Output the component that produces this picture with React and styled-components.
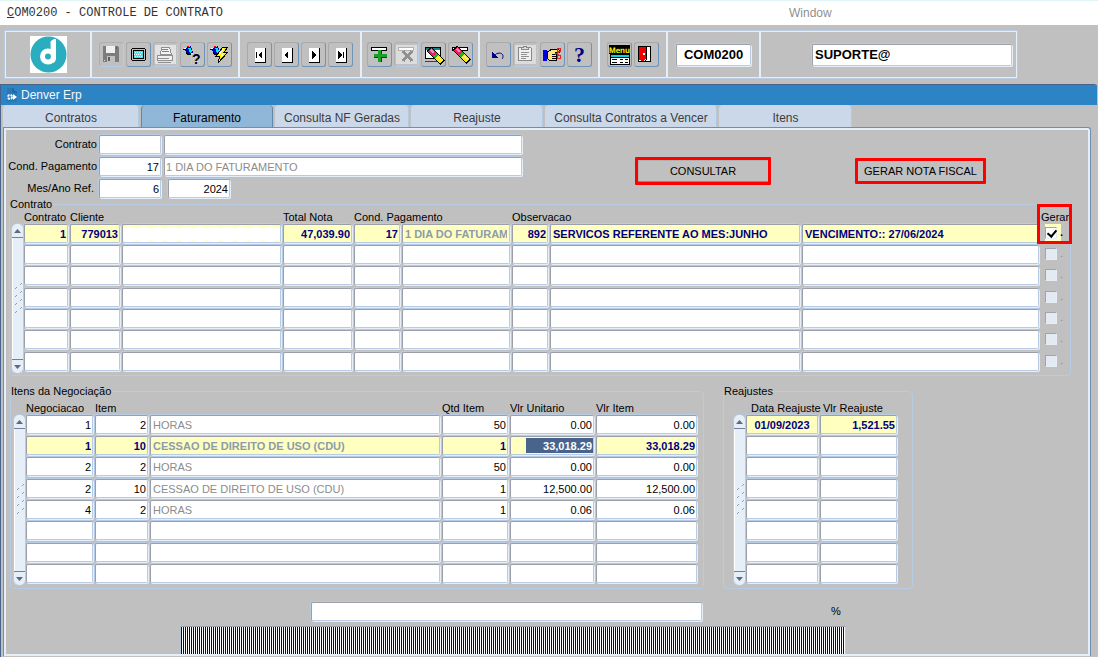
import React, { useState } from 'react'
import styled, { createGlobalStyle, css } from 'styled-components'

const face = '#c0c0c0'
const edge = '#b7cbe4'
const light = '#e6eef8'
const navy = '#000080'
const current = '#ffffc0'

const GlobalStyle = createGlobalStyle`
  * {
    box-sizing: border-box;
  }
  body {
    margin: 0;
    background: ${face};
    color: #000;
    font: 11px/13px 'Liberation Sans', Arial, sans-serif;
  }
  button, input {
    font: inherit;
    color: inherit;
    margin: 0;
    outline: 0;
  }
`

const Page = styled.div`
  display: flex;
  flex-direction: column;
  min-height: 100vh;
`

const MenuBar = styled.header`
  display: flex;
  align-items: center;
  height: 25px;
  padding-left: 7px;
  background: #fff;
  border-top: 1px solid #e0f4f8;
`

const ProgramTitle = styled.h1`
  width: 782px;
  margin: 0;
  font: 12px/16px 'Liberation Mono', 'Courier New', monospace;
  color: #333;
  &::first-letter {
    text-decoration: underline;
  }
`

const MenuItem = styled.button`
  padding: 0;
  border: none;
  background: none;
  font-size: 12px;
  line-height: 16px;
  color: #909090;
`

const Toolbar = styled.div`
  display: flex;
  align-self: flex-start;
  height: 49px;
  margin: 5px 0 5px 4px;
  border: 2px solid ${light};
  outline: 1px solid ${edge};
  outline-offset: -1px;
`

const ToolGroup = styled.div`
  display: flex;
  align-items: center;
  justify-content: center;
  gap: 2px;
  width: ${p => p.$width}px;
  border-right: 2px solid ${light};
  &:last-child {
    justify-content: flex-end;
    border-right: none;
    padding-right: 4px;
  }
`

const ToolButton = styled.button`
  width: 25px;
  height: 25px;
  padding: 0;
  border: 1px solid;
  border-color: #a9a9a9 #6f93b8 #6f93b8 #a9a9a9;
  border-radius: 3px;
  background: ${face};
  line-height: 0;
  cursor: pointer;
  svg {
    display: block;
  }
  &:disabled {
    border-color: #b0b0b0 ${edge} ${edge} #b0b0b0;
    cursor: default;
  }
`

const field = css`
  display: block;
  min-width: 0;
  border: 1px solid;
  border-color: #9b9fa8 ${edge} ${edge} #9b9fa8;
  border-radius: 2px;
  box-shadow: 1px 1px 0 ${light}, -1px -1px 0 ${edge};
  background: #fff;
`

const ToolField = styled.input`
  ${field}
  width: ${p => p.$width}px;
  height: 22px;
  padding: 0 2px;
  font-size: 13px;
  font-weight: bold;
  text-align: ${p => p.$align || 'left'};
`

const Window = styled.main`
  display: flex;
  flex: 1;
  flex-direction: column;
  margin-right: 1px;
  border-left: 1px solid #48648c;
  border-top: 1px solid #48648c;
  border-top-right-radius: 3px;
`

const WindowTitle = styled.div`
  display: flex;
  align-items: center;
  gap: 3px;
  height: 20px;
  padding-left: 5px;
  background: #2c84c4;
  color: #f4f8fc;
  font-size: 12px;
`

const Tabs = styled.nav`
  display: flex;
  gap: 2px;
  padding-left: 2px;
`

const Tab = styled.button`
  width: ${p => p.$width}px;
  height: 22px;
  padding: 3px 0 0;
  border: none;
  border-right: 1px solid ${p => (p.$active ? '#5f86ae' : '#b4c8e0')};
  border-left: 1px solid ${p => (p.$active ? '#5f86ae' : '#cbd8ea')};
  border-radius: 4px 4px 0 0;
  background: ${p => (p.$active ? '#90b6d8' : '#cbd8ea')};
  color: ${p => (p.$active ? '#000' : '#3c3c3c')};
  font-size: 12px;
  line-height: 18px;
  white-space: nowrap;
`

const Panel = styled.section`
  display: flex;
  flex: 1;
  flex-direction: column;
  margin: 0 6px 1px 2px;
  padding: 7px 19px 0 5px;
  border: 1px solid #6f8fb0;
  border-bottom: none;
  border-top-right-radius: 3px;
  box-shadow: inset 0 0 0 2px ${light};
`

const Filters = styled.form`
  display: flex;
  align-items: flex-start;
`

const FilterRows = styled.div`
  display: flex;
  flex-direction: column;
  gap: 3px;
  width: 513px;
`

const FilterRow = styled.div`
  display: flex;
  align-items: center;
  gap: ${p => p.$gap || 3}px;
`

const FilterLabel = styled.label`
  width: 88px;
  margin-right: 2px;
  display: flex;
  justify-content: flex-end;
  white-space: pre;
  & + input {
    margin-left: ${p => -(p.$gap || 3)}px;
  }
`

const Field = styled.input`
  ${field}
  flex: ${p => (p.$width ? `0 0 ${p.$width}px` : 1)};
  height: 19px;
  padding: 0 1px;
  text-align: ${p => (p.$right ? 'right' : 'left')};
  color: ${p => (p.$muted ? '#8c8c8c' : '#000')};
`

const Actions = styled.div`
  display: flex;
  align-items: center;
  gap: 84px;
  padding: 22px 0 0 113px;
`

const ActionButton = styled.button`
  width: ${p => p.$width}px;
  height: ${p => p.$height}px;
  padding: 0;
  border: 3px solid #f00;
  border-radius: 1px;
  background: ${face};
  box-shadow: ${p => (p.$raised ? 'inset 0 -1px 0 #6f8fb0, inset 1px 1px 0 #b0b0b0' : 'none')};
  white-space: nowrap;
`

const Group = styled.fieldset`
  flex: ${p => (p.$width ? `0 0 ${p.$width}px` : 'none')};
  min-width: 0;
  margin: 0;
  padding: 0 0 ${p => p.$bottom}px;
  border: 1px solid ${edge};
  border-radius: 4px;
  legend {
    padding: 0;
  }
`

const GroupBody = styled.div`
  display: flex;
  padding: ${p => p.$pad};
`

const Blocks = styled.div`
  display: flex;
  gap: 19px;
  margin: 9px 0 0 1px;
`

const Scroll = styled.div`
  display: flex;
  flex: 0 0 11px;
  flex-direction: column;
  align-items: stretch;
  margin: 13px 1px 0 0;
  border-radius: 5px;
  background: ${light};
  box-shadow: 0 0 0 1px ${edge};
`

const ScrollButton = styled.button`
  height: 14px;
  padding: 0;
  border: 0 solid #6f7f9c;
  border-width: ${p => (p.$down ? '1px 0 0' : '0 0 1px')};
  background: none;
  line-height: 0;
`

const Track = styled.div`
  display: flex;
  flex: 1;
  align-items: center;
  justify-content: center;
  border-left: 1px solid #fff;
`

const Grid = styled.table`
  flex: 1;
  width: 100%;
  table-layout: fixed;
  border-collapse: collapse;
  th {
    height: 13px;
    padding: 0;
    font-weight: normal;
    text-align: left;
    white-space: nowrap;
  }
  td {
    height: 21px;
    padding: 0 2px 0 0;
    vertical-align: top;
  }
  tbody tr:nth-child(3n) td {
    height: 22px;
  }
`

const HeaderCell = styled.th`
  && {
    padding-left: ${p => p.$indent || 0}px;
  }
`

const Cell = styled.input`
  ${field}
  width: 100%;
  height: 19px;
  padding: 0 ${p => (p.$align === 'right' ? 1 : 2)}px;
  text-align: ${p => p.$align || 'left'};
  color: ${p => (p.$muted ? '#8c8c8c' : '#000')};
  ${p =>
    p.$current &&
    css`
      background: ${current};
      color: ${p.$muted ? '#8c9cac' : navy};
      font-weight: bold;
    `}
  ${p =>
    p.$selected &&
    css`
      color: #fff;
      background: linear-gradient(#48648c, #48648c) right center / 67px 15px no-repeat ${current};
    `}
  ${p =>
    p.$masked &&
    css`
      background: radial-gradient(ellipse 10px 8px at 50% 55%, #fff 96%, transparent) 0 0 / 14px 100% ${current};
    `}
`

const Check = styled.label`
  display: flex;
  align-items: center;
  gap: 3px;
  width: 16px;
  height: 17px;
  margin-left: 4px;
  color: ${p => (p.$current ? navy : '#8c8c8c')};
  font-weight: ${p => (p.$current ? 'bold' : 'normal')};
  background: ${p => (p.$current ? current : 'none')};
  input {
    position: relative;
    flex: none;
    appearance: none;
    width: 12px;
    height: 12px;
    border: 1px solid;
    border-color: #a0a4ac ${light} ${light} #a0a4ac;
    background: ${p => (p.$current ? '#fff' : '#e4eaf2')};
  }
  input:checked::after {
    content: '';
    position: absolute;
    left: 3px;
    top: 0;
    width: 4px;
    height: 7px;
    border: solid #000;
    border-width: 0 2px 2px 0;
    transform: rotate(40deg);
  }
`

const MarkedHeader = styled.th`
  position: relative;
  &::after {
    content: '';
    position: absolute;
    top: -7px;
    left: -4px;
    width: 29px;
    height: 34px;
    border: 3px solid #f00;
    pointer-events: none;
  }
`

const Footer = styled.footer`
  display: flex;
  flex-direction: column;
  flex: 1;
  margin: 13px -19px 0 -3px;
  border-bottom: 2px solid ${light};
`

const Status = styled.div`
  display: flex;
  align-items: center;
  gap: 129px;
  padding-left: 305px;
`

const Progress = styled.div`
  width: 666px;
  height: 28px;
  margin: 5px 0 0 174px;
  border: 1px solid ${edge};
  border-top-color: #9b9fa8;
  border-bottom: none;
  background: repeating-linear-gradient(to right, ${navy} 0 1px, #fff 1px 2px);
`

const Icon = ({ children }) => (
  <svg width="23" height="23" viewBox="1 1 23 23" shapeRendering="crispEdges" aria-hidden="true">
    {children}
  </svg>
)

const Nav = ({ d }) => (
  <Icon>
    <path d="M8 6h10v14H8z" fill="#fff" />
    <path d="M18.500 6v14.500H8" stroke="#000" fill="none" />
    <path d={d} fill="#000" />
  </Icon>
)

const Torch = () => (
  <g>
    <path d="M4 7l7-3 2 7-4 2z" fill="#0000c0" />
    <path d="M8 6l3 0 1 4-2 1z" fill="#00e8f8" />
    <path d="M3 8l3-1M6 10l2 3 3-1" stroke="#000" fill="none" />
    <path d="M7 4h2v1H7z" fill="#f00" />
    <path d="M4 6h2v1H4zM11 11h2v1h-2z" fill="#fff" />
  </g>
)

const Eraser = ({ x = 0, y = 0 }) => (
  <g transform={`translate(${x} ${y})`} fill="none">
    <path d="M4 3l14 14" stroke="#000" strokeWidth="7" />
    <path d="M5 4l5 5" stroke="#f02060" strokeWidth="5" />
    <path d="M6 4l3 3" stroke="#f090c8" strokeWidth="2" />
    <path d="M10 9l2 2" stroke="#20b020" strokeWidth="5" />
    <path d="M12 11l5 5" stroke="#f8e820" strokeWidth="5" />
    <path d="M13 11l4 4" stroke="#fffcb0" strokeWidth="1" />
  </g>
)

const icons = {
  save: (
    <Icon>
      <path d="M4 4h15l1 2v14H4z" fill="#7c7c7c" />
      <path d="M7 4h9v7H7z" fill="#f0f0f0" />
      <path d="M8 14h8v6H8z" fill="#c0c0c0" />
      <path d="M9 15h2v4H9zM17 5h1v2h-1z" fill="#606060" />
      <path d="M5 18h1v1H5z" fill="#e0e0e0" />
    </Icon>
  ),
  screen: (
    <Icon>
      <path d="M6 6h13v1h1v11h-1v1H6v-1H5V7h1z" fill="#000" />
      <path d="M6 7h13v11H6z" fill="#c0c0c0" />
      <path d="M7 8h11v9H7z" fill="#000" />
      <path d="M8 9h9v7H8z" fill="#50e0e8" />
      <path d="M9 10.5h8M8 12.5h8M9 14.5h8" stroke="#fff" strokeDasharray="1 1" fill="none" />
    </Icon>
  ),
  print: (
    <Icon>
      <path d="M2 3h21v19H2z" fill="#e2e2e2" />
      <path d="M8.5 5.5h8l2 7h-11z" fill="#f4f4f4" stroke="#909090" />
      <path d="M9 7.5h6M9 9.5h7" stroke="#808080" />
      <path d="M4.500 13.500h15v5h-15z" fill="#f0f0f0" stroke="#909090" />
      <path d="M5 16.500h11M5 20.500h13" stroke="#909090" />
    </Icon>
  ),
  query: (
    <Icon>
      <Torch />
      <path d="M11 13.500h9M11 15.500h10M11 17.500h9M11 19.500h10M11 21.500h9" stroke="#f0e820" strokeDasharray="1 1" />
      <text x="12" y="22" fontSize="14" fontWeight="bold" fontFamily="Liberation Sans" fill="#000">?</text>
    </Icon>
  ),
  execute: (
    <Icon>
      <Torch />
      <path d="M16 5l5 0-4 5 4 0-10 11 2-7-4 0z" fill="#f8f000" stroke="#000" strokeWidth="1" />
      <path d="M17 6l-5 7M17 11l-3 4" stroke="#fff" fill="none" />
    </Icon>
  ),
  first: <Nav d="M9 10h1v6H9zM15 9v8l-4-4z" />,
  prev: <Nav d="M14 9v8l-4-4z" />,
  next: <Nav d="M11 9v8l4-4z" />,
  last: <Nav d="M10 9v8l4-4zM15 10h1v6h-1z" />,
  insert: (
    <Icon>
      <path d="M4.500 5.500h15v3h-15z" fill="#fff" stroke="#000" />
      <path d="M11 8h4v4h5v3h-5v5h-4v-5H7v-3h4z" fill="#18a028" />
      <path d="M14.500 8v4M7 15h4M15 15h5M14.500 15v5" stroke="#004808" fill="none" />
    </Icon>
  ),
  remove: (
    <Icon>
      <path d="M2 3h21v19H2z" fill="#dcdcdc" />
      <path d="M4.500 5.500h15v3h-15z" fill="#fff" stroke="#b0b0b0" />
      <path d="M9 9l9 10M18 9L9 19" stroke="#909090" strokeWidth="3" fill="none" />
    </Icon>
  ),
  clearForm: (
    <Icon>
      <path d="M4.500 5.500h15v11h-15z" fill="#fff" stroke="#000" />
      <path d="M5 6h14v2H5z" fill="#108080" />
      <path d="M4 19.500h12" stroke="#404040" />
      <Eraser x={4} y={4} />
    </Icon>
  ),
  clearRecord: (
    <Icon>
      <path d="M4.500 5.500h15v3h-15z" fill="#fff" stroke="#000" />
      <Eraser x={3} y={3} />
    </Icon>
  ),
  undo: (
    <Icon>
      <path d="M8 15c1-5 9-5 9-1 0 1 0 2-1 3" stroke={navy} fill="none" shapeRendering="auto" />
      <path d="M6 10v6h6z" fill={navy} />
    </Icon>
  ),
  paste: (
    <Icon>
      <path d="M2 3h21v19H2z" fill="#dcdcdc" />
      <path d="M5.500 5.500h12l1 1v12h-13z" fill="#f0f0f0" stroke="#888" />
      <path d="M8.500 7.500v-2h2v-1h3v1h2v2z" fill="#ddd" stroke="#888" />
      <path d="M8 10.500h8M8 12.500h6M8 14.500h8M8 16.500h5" stroke="#909090" />
    </Icon>
  ),
  hand: (
    <Icon>
      <path d="M3 8h4v11H3z" fill="#0000e0" />
      <path d="M7 9h2l3-2h3l4 1v2h-4l2 1v2l-1 2v3H9l-2-2z" fill="#ffe080" stroke="#000" />
      <path d="M12 12h5M12 14h4M12 16h4" stroke="#000" />
      <circle cx="19" cy="8" r="2" fill="none" stroke="#e02020" />
      <circle cx="19" cy="15" r="2" fill="none" stroke="#e02020" />
      <path d="M15 11l4 2M15 13l4-3" stroke="#e02020" />
    </Icon>
  ),
  help: (
    <Icon>
      <text x="7" y="20" fontSize="22" fontWeight="bold" fontFamily="Liberation Serif" fill={navy}>?</text>
    </Icon>
  ),
  menu: (
    <Icon>
      <path d="M2 3h21v9H2z" fill="#000" />
      <text x="2" y="11" fontSize="8" textRendering="geometricPrecision" fontWeight="bold" fontFamily="Liberation Sans" fill="#fff200">Menu</text>
      <path d="M3 12h20v11H3z" fill="#000" />
      <path d="M4 13h18v2H4z" fill="#00d8e0" />
      <path d="M4 16h18v6H4z" fill="#fff" />
      <path d="M5 17.500h5M13 17.500h3M18 17.500h3M5 20.500h5M13 20.500h3M18 20.500h3" stroke="#000" />
    </Icon>
  ),
  exit: (
    <Icon>
      <path d="M4.500 4.500h12v15h-12z" fill="#fff" stroke="#000" />
      <path d="M5 5h7v12l-3 2-4-1z" fill="#f00000" />
      <path d="M12 5h1v13l-3 2v-1l2-2z" fill="#000" />
      <path d="M9 11h2v2H9z" fill="#fff" />
    </Icon>
  )
}

const toolGroups = [
  {
    width: 148,
    tools: [
      { icon: 'save', label: 'Salvar', disabled: true },
      { icon: 'screen', label: 'Tela' },
      { icon: 'print', label: 'Imprimir', disabled: true },
      { icon: 'query', label: 'Entrar consulta' },
      { icon: 'execute', label: 'Executar consulta' }
    ]
  },
  {
    width: 122,
    tools: [
      { icon: 'first', label: 'Primeiro' },
      { icon: 'prev', label: 'Anterior' },
      { icon: 'next', label: 'Proximo' },
      { icon: 'last', label: 'Ultimo' }
    ]
  },
  {
    width: 118,
    tools: [
      { icon: 'insert', label: 'Inserir' },
      { icon: 'remove', label: 'Remover', disabled: true },
      { icon: 'clearForm', label: 'Limpar tela' },
      { icon: 'clearRecord', label: 'Limpar registro' }
    ]
  },
  {
    width: 120,
    tools: [
      { icon: 'undo', label: 'Desfazer' },
      { icon: 'paste', label: 'Colar', disabled: true },
      { icon: 'hand', label: 'Recortar' },
      { icon: 'help', label: 'Ajuda' }
    ]
  },
  {
    width: 68,
    tools: [
      { icon: 'menu', label: 'Menu' },
      { icon: 'exit', label: 'Sair' }
    ]
  }
]

const tabs = [
  { name: 'Contratos', width: 136 },
  { name: 'Faturamento', width: 132 },
  { name: 'Consulta NF Geradas', width: 134 },
  { name: 'Reajuste', width: 132 },
  { name: 'Consulta Contratos a Vencer', width: 172 },
  { name: 'Itens', width: 133 }
]

const contractCols = [
  { name: 'Contrato', width: 46, align: 'right' },
  { name: 'Codigo cliente', width: 52, align: 'right' },
  { name: 'Cliente', width: 161, masked: true },
  { name: 'Total Nota', width: 71, align: 'right' },
  { name: 'Cond. Pagamento', width: 48, align: 'right' },
  { name: 'Descricao pagamento', width: 110, muted: true },
  { name: 'Codigo observacao', width: 38, align: 'right' },
  { name: 'Observacao', width: 252 },
  { name: 'Vencimento' }
]

const contracts = [
  ['1', '779013', '', '47,039.90', '17', '1 DIA DO FATURAMENTO', '892', 'SERVICOS REFERENTE AO MES:JUNHO', 'VENCIMENTO:: 27/06/2024'],
  [], [], [], [], [], []
]

const itemCols = [
  { name: 'Negociacao', width: 69, align: 'right' },
  { name: 'Item', width: 55, align: 'right' },
  { name: 'Descricao', width: 292, muted: true },
  { name: 'Qtd Item', width: 68, align: 'right' },
  { name: 'Vlr Unitario', width: 86, align: 'right', selectable: true },
  { name: 'Vlr Item', width: 103, align: 'right' }
]

const items = [
  ['1', '2', 'HORAS', '50', '0.00', '0.00'],
  ['1', '10', 'CESSAO DE DIREITO DE USO (CDU)', '1', '33,018.29', '33,018.29'],
  ['2', '2', 'HORAS', '50', '0.00', '0.00'],
  ['2', '10', 'CESSAO DE DIREITO DE USO (CDU)', '1', '12,500.00', '12,500.00'],
  ['4', '2', 'HORAS', '1', '0.06', '0.06'],
  [], [], []
]

const adjustCols = [
  { name: 'Data Reajuste', width: 74, align: 'center' },
  { name: 'Vlr Reajuste', width: 79, align: 'right' }
]

const adjusts = [['01/09/2023', '1,521.55'], [], [], [], [], [], [], []]

const ScrollBar = () => (
  <Scroll>
    <ScrollButton type="button" aria-label="Subir">
      <svg width="7" height="4" viewBox="0 0 7 4"><path d="M0 4l3.500-4L7 4z" fill="#5f6880" /></svg>
    </ScrollButton>
    <Track>
      <svg width="10" height="34" viewBox="0 0 10 34" aria-hidden="true">
        {[0, 8, 16, 24].map(y => (
          <path key={y} d={`M2 ${y + 7}l2-2M7 ${y + 3}l2-2`} stroke="#8ca0bc" />
        ))}
      </svg>
    </Track>
    <ScrollButton type="button" $down aria-label="Descer">
      <svg width="7" height="4" viewBox="0 0 7 4"><path d="M0 0l3.500 4L7 0z" fill="#5f6880" /></svg>
    </ScrollButton>
  </Scroll>
)

const Columns = ({ cols }) => (
  <colgroup>
    {cols.map(col => <col key={col.name} width={col.width} />)}
  </colgroup>
)

const Cells = ({ cols, row, isCurrent, line }) =>
  cols.map((col, i) => (
    <td key={col.name}>
      <Cell
        readOnly
        aria-label={`${col.name} ${line + 1}`}
        value={row[i] || ''}
        $align={col.align}
        $muted={col.muted}
        $current={isCurrent}
        $masked={isCurrent && col.masked}
        $selected={isCurrent && col.selectable}
      />
    </td>
  ))

const Contracts = () => {
  const [checked, setChecked] = useState([0])
  const toggle = i =>
    setChecked(checked.includes(i) ? checked.filter(c => c !== i) : [...checked, i])
  return (
    <Group $bottom={2}>
      <legend>Contrato</legend>
      <GroupBody $pad="0 8px 0 2px">
        <ScrollBar />
        <Grid>
          <Columns cols={[...contractCols, { name: 'Gerar', width: 21 }]} />
          <thead>
            <tr>
              <th>Contrato</th>
              <th colSpan="2">Cliente</th>
              <th>Total Nota</th>
              <th colSpan="2">Cond. Pagamento</th>
              <th colSpan="3">Observacao</th>
              <MarkedHeader>Gerar</MarkedHeader>
            </tr>
          </thead>
          <tbody>
            {contracts.map((row, i) => (
              <tr key={i}>
                <Cells cols={contractCols} row={row} isCurrent={i === 0} line={i} />
                <td>
                  <Check $current={i === 0}>
                    <input
                      type="checkbox"
                      aria-label={`Gerar ${i + 1}`}
                      checked={checked.includes(i)}
                      onChange={() => toggle(i)}
                    />
                    .
                  </Check>
                </td>
              </tr>
            ))}
          </tbody>
        </Grid>
      </GroupBody>
    </Group>
  )
}

const Items = () => (
  <Group $width={694} $bottom={3}>
    <legend>Itens da Negociação</legend>
    <GroupBody $pad="4px 4px 0 3px">
      <ScrollBar />
      <Grid>
        <Columns cols={itemCols} />
        <thead>
          <tr>
            <th>Negociacao</th>
            <th colSpan="2">Item</th>
            <th>Qtd Item</th>
            <th>Vlr Unitario</th>
            <th>Vlr Item</th>
          </tr>
        </thead>
        <tbody>
          {items.map((row, i) => (
            <tr key={i}>
              <Cells cols={itemCols} row={row} isCurrent={i === 1} line={i} />
            </tr>
          ))}
        </tbody>
      </Grid>
    </GroupBody>
  </Group>
)

const Adjusts = () => (
  <Group $width={190} $bottom={3}>
    <legend>Reajustes</legend>
    <GroupBody $pad="4px 13px 0 10px">
      <ScrollBar />
      <Grid>
        <Columns cols={adjustCols} />
        <thead>
          <tr>
            <HeaderCell $indent={5}>Data Reajuste</HeaderCell>
            <HeaderCell $indent={3}>Vlr Reajuste</HeaderCell>
          </tr>
        </thead>
        <tbody>
          {adjusts.map((row, i) => (
            <tr key={i}>
              <Cells cols={adjustCols} row={row} isCurrent={i === 0} line={i} />
            </tr>
          ))}
        </tbody>
      </Grid>
    </GroupBody>
  </Group>
)

const App = () => {
  const [tab, setTab] = useState('Faturamento')
  return (
    <Page>
      <GlobalStyle />
      <MenuBar>
        <ProgramTitle>COM0200 - CONTROLE DE CONTRATO</ProgramTitle>
        <MenuItem>Window</MenuItem>
      </MenuBar>
      <Toolbar>
        <ToolGroup $width={86}>
          <svg width="37" height="37" viewBox="0 0 37 37" aria-label="Denver">
            <path d="M0 0h37v37H0z" fill="#fff" />
            <circle cx="18.500" cy="18.500" r="18" fill="#2badc0" />
            <circle cx="18" cy="20.500" r="5.500" fill="none" stroke="#fff" strokeWidth="5" />
            <path d="M20.500 5.500Q24 2 26 3V21q0 5-3 6l-2-2z" fill="#fff" />
          </svg>
        </ToolGroup>
        {toolGroups.map((group, i) => (
          <ToolGroup key={i} $width={group.width}>
            {group.tools.map(tool => (
              <ToolButton key={tool.icon} type="button" aria-label={tool.label} disabled={tool.disabled}>
                {icons[tool.icon]}
              </ToolButton>
            ))}
          </ToolGroup>
        ))}
        <ToolGroup $width={93}>
          <ToolField readOnly aria-label="Programa" value="COM0200" $width={75} $align="center" />
        </ToolGroup>
        <ToolGroup $width={255}>
          <ToolField readOnly aria-label="Usuario" value="SUPORTE@" $width={200} />
        </ToolGroup>
      </Toolbar>
      <Window>
        <WindowTitle>
          <svg width="12" height="14" viewBox="0 0 12 14" aria-hidden="true">
            <path d="M1 0h6l4 4v10H1z" fill="#2878b4" />
            <path d="M7 0v4h4" fill="none" stroke="#1c5c94" />
            <circle cx="4" cy="9" r="2" fill="none" stroke="#fff" strokeWidth="2" strokeDasharray="2 1" />
            <path d="M7 6l4 3-4 3z" fill="#fff" />
          </svg>
          Denver Erp
        </WindowTitle>
        <Tabs>
          {tabs.map(t => (
            <Tab key={t.name} $width={t.width} $active={t.name === tab} onClick={() => setTab(t.name)}>
              {t.name}
            </Tab>
          ))}
        </Tabs>
        <Panel>
          <Filters onSubmit={event => event.preventDefault()}>
            <FilterRows>
              <FilterRow>
                <FilterLabel htmlFor="contrato">Contrato</FilterLabel>
                <Field id="contrato" $width={62} />
                <Field aria-label="Nome do contrato" />
              </FilterRow>
              <FilterRow>
                <FilterLabel htmlFor="pagamento">Cond. Pagamento</FilterLabel>
                <Field id="pagamento" $width={62} $right defaultValue="17" />
                <Field aria-label="Descricao" $muted defaultValue="1 DIA DO FATURAMENTO" />
              </FilterRow>
              <FilterRow $gap={7}>
                <FilterLabel htmlFor="mes" $gap={7}>{'Mes/Ano Ref.\u00a0'}</FilterLabel>
                <Field id="mes" $width={62} $right defaultValue="6" />
                <Field aria-label="Ano" $width={62} $right defaultValue="2024" />
              </FilterRow>
            </FilterRows>
            <Actions>
              <ActionButton $width={136} $height={28} $raised>CONSULTAR</ActionButton>
              <ActionButton $width={131} $height={26}>GERAR NOTA FISCAL</ActionButton>
            </Actions>
          </Filters>
          <Contracts />
          <Blocks>
            <Items />
            <Adjusts />
          </Blocks>
          <Footer>
            <Status>
              <Field aria-label="Mensagem" $width={391} />
              %
            </Status>
            <Progress role="progressbar" aria-label="Progresso" />
          </Footer>
        </Panel>
      </Window>
    </Page>
  )
}

export default App
